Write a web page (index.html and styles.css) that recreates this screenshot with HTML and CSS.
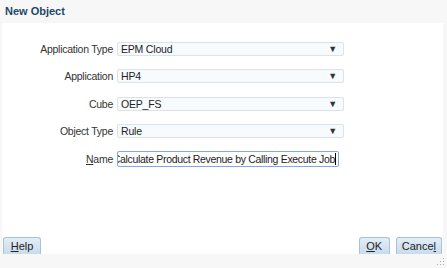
FILE: index.html
```html
<!DOCTYPE html>
<html lang="en">
<head>
    <meta charset="UTF-8">
    <title>New Object</title>
    <link rel="stylesheet" href="styles.css">
</head>
<body>
    <div class="dialog">
        <div class="header">New Object</div>
        <div class="content">
            <div class="form">
                <div class="row">
                    <span class="label">Application Type</span>
                    <div class="select"><span>EPM Cloud</span><span class="arrow">&#9660;</span></div>
                </div>
                <div class="row">
                    <span class="label">Application</span>
                    <div class="select"><span>HP4</span><span class="arrow">&#9660;</span></div>
                </div>
                <div class="row">
                    <span class="label">Cube</span>
                    <div class="select"><span>OEP_FS</span><span class="arrow">&#9660;</span></div>
                </div>
                <div class="row">
                    <span class="label">Object Type</span>
                    <div class="select"><span>Rule</span><span class="arrow">&#9660;</span></div>
                </div>
                <div class="row">
                    <span class="label"><u>N</u>ame</span>
                    <div class="input"><span class="value">Calculate Product Revenue by Calling Execute Job</span></div>
                </div>
            </div>
            <div class="buttons">
                <button class="btn help"><u>H</u>elp</button>
                <span class="spacer"></span>
                <button class="btn"><u>O</u>K</button>
                <button class="btn">Cance<u>l</u></button>
            </div>
        </div>
        <div class="footer"><span class="grip"></span></div>
    </div>
</body>
</html>
```

FILE: styles.css
```css
body {
    margin: 0;
    font-family: "Liberation Sans", Arial, sans-serif;
    background: #f7f7f7;
}
.dialog {
    width: 447px;
    height: 268px;
    display: flex;
    flex-direction: column;
    background: #f7f7f7;
    border-radius: 5px 5px 0 0;
    overflow: hidden;
}
.header {
    height: 23px;
    line-height: 22px;
    padding-left: 5px;
    font-weight: bold;
    font-size: 11px;
    color: #1d4767;
}
.content {
    flex: 1;
    margin: 0 4px 0 2px;
    background: #fff;
    display: flex;
    flex-direction: column;
}
.form {
    padding-top: 12px;
    flex: 1;
}
.row {
    display: flex;
    align-items: center;
    height: 27.5px;
}
.label {
    width: 111px;
    padding-right: 4px;
    text-align: right;
    font-size: 10.5px;
    letter-spacing: -0.25px;
    color: #333;
}
.select {
    width: 216px;
    height: 12px;
    border: 1px solid #dbe2e8;
    border-radius: 2px;
    background: #f7fbfe;
    display: flex;
    align-items: center;
    justify-content: space-between;
    padding: 0 6px 0 3px;
    font-size: 10.5px;
    letter-spacing: -0.2px;
    color: #222;
}
.arrow {
    font-size: 9px;
    color: #333;
}
.input {
    width: 216px;
    height: 14px;
    margin-top: 1px;
    border: 1px solid #7ea8e8;
    border-radius: 2px;
    background: #fff;
    display: flex;
    justify-content: flex-end;
    align-items: center;
    overflow: hidden;
    padding: 0 2px;
    font-size: 10.5px;
    letter-spacing: -0.32px;
    color: #222;
    white-space: nowrap;
}
.value {
    border-right: 1px solid #000;
}
.buttons {
    display: flex;
    align-items: flex-end;
    gap: 6px;
    padding: 0 1px 0 1px;
}
.spacer {
    flex: 1;
}
.btn {
    height: 17px;
    min-width: 31px;
    padding: 0 5px;
    border: 1px solid #a6c3de;
    border-bottom: none;
    border-radius: 3px 3px 0 0;
    background: linear-gradient(#e3edf6, #c9dbed);
    font-family: "Liberation Sans", Arial, sans-serif;
    font-size: 11px;
    color: #222;
}
.help {
    width: 38px;
}
.footer {
    height: 14px;
    position: relative;
}
.grip {
    position: absolute;
    right: 3px;
    bottom: 3px;
    width: 8px;
    height: 8px;
    background: radial-gradient(circle, #aaa 0.7px, transparent 0.8px) 0 0 / 3px 3px;
    clip-path: polygon(100% 0, 100% 100%, 0 100%);
}
```
